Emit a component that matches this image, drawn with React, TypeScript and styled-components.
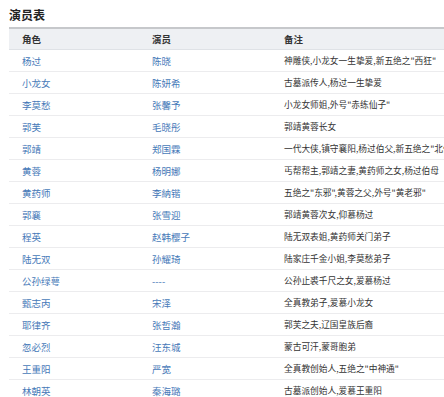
import styled, { createGlobalStyle } from "styled-components";

interface CastRow {
  role: string,
  actor: string,
  note: string,
}

const cast: CastRow[] = [
  { role: "杨过", actor: "陈晓", note: "神雕侠,小龙女一生挚爱,新五绝之\"西狂\"" },
  { role: "小龙女", actor: "陈妍希", note: "古墓派传人,杨过一生挚爱" },
  { role: "李莫愁", actor: "张馨予", note: "小龙女师姐,外号\"赤练仙子\"" },
  { role: "郭芙", actor: "毛晓彤", note: "郭靖黄蓉长女" },
  { role: "郭靖", actor: "郑国霖", note: "一代大侠,镇守襄阳,杨过伯父,新五绝之\"北侠\"" },
  { role: "黄蓉", actor: "杨明娜", note: "丐帮帮主,郭靖之妻,黄药师之女,杨过伯母" },
  { role: "黄药师", actor: "李納锴", note: "五绝之\"东邪\",黄蓉之父,外号\"黄老邪\"" },
  { role: "郭襄", actor: "张雪迎", note: "郭靖黄蓉次女,仰慕杨过" },
  { role: "程英", actor: "赵韩樱子", note: "陆无双表姐,黄药师关门弟子" },
  { role: "陆无双", actor: "孙耀琦", note: "陆家庄千金小姐,李莫愁弟子" },
  { role: "公孙绿萼", actor: "----", note: "公孙止裘千尺之女,爱慕杨过" },
  { role: "甄志丙", actor: "宋泽", note: "全真教弟子,爱慕小龙女" },
  { role: "耶律齐", actor: "张哲瀚", note: "郭芙之夫,辽国皇族后裔" },
  { role: "忽必烈", actor: "汪东城", note: "蒙古可汗,蒙哥胞弟" },
  { role: "王重阳", actor: "严宽", note: "全真教创始人,五绝之\"中神通\"" },
  { role: "林朝英", actor: "秦海璐", note: "古墓派创始人,爱慕王重阳" },
];

const GlobalStyle = createGlobalStyle`
  html, body {
    margin: 0;
    padding: 0;
    background: #ffffff;
    overflow: hidden;
  }
  body {
    font-family: "Noto Sans CJK SC", "Liberation Sans", sans-serif;
  }
`;

const Page = styled.div`
  width: 444px;
  height: 397px;
  overflow: hidden;
  padding-left: 9px;
  box-sizing: border-box;
`;

const Title = styled.h2`
  margin: 0;
  height: 27px;
  line-height: 30px;
  font-size: 12px;
  font-weight: bold;
  color: #222;
`;

// wider than the window on purpose: the long notes run past the right edge
const Table = styled.div`
  width: 480px;
  border-top: 2px solid #c6c8cb;
`;

const Row = styled.div<{ $head?: boolean }>`
  display: grid;
  grid-template-columns: 130px 132px 1fr;
  height: ${props => props.$head ? "20px" : "21px"};
  align-items: center;
  background: ${props => props.$head ? "#eef0f3" : "#ffffff"};
  border-bottom: 1px solid ${props => props.$head ? "#dfe2e6" : "#ececee"};
  white-space: nowrap;
`;

const HeadCell = styled.div`
  padding-left: 13px;
  font-size: 9.5px;
  font-weight: bold;
  color: #333;
`;

const LinkCell = styled.div`
  padding-left: 13px;
  font-size: 9.5px;
  color: #4679b8;
`;

const NoteCell = styled.div`
  padding-left: 13px;
  font-size: 8.7px;
  color: #333;
`;

function App() {
  return (
    <Page>
      <GlobalStyle />
      <Title>演员表</Title>
      <Table>
        <Row $head>
          <HeadCell>角色</HeadCell>
          <HeadCell>演员</HeadCell>
          <HeadCell>备注</HeadCell>
        </Row>
        {cast.map(item => (
          <Row key={item.role}>
            <LinkCell>{item.role}</LinkCell>
            <LinkCell>{item.actor}</LinkCell>
            <NoteCell>{item.note}</NoteCell>
          </Row>
        ))}
      </Table>
    </Page>
  );
}

export default App;
